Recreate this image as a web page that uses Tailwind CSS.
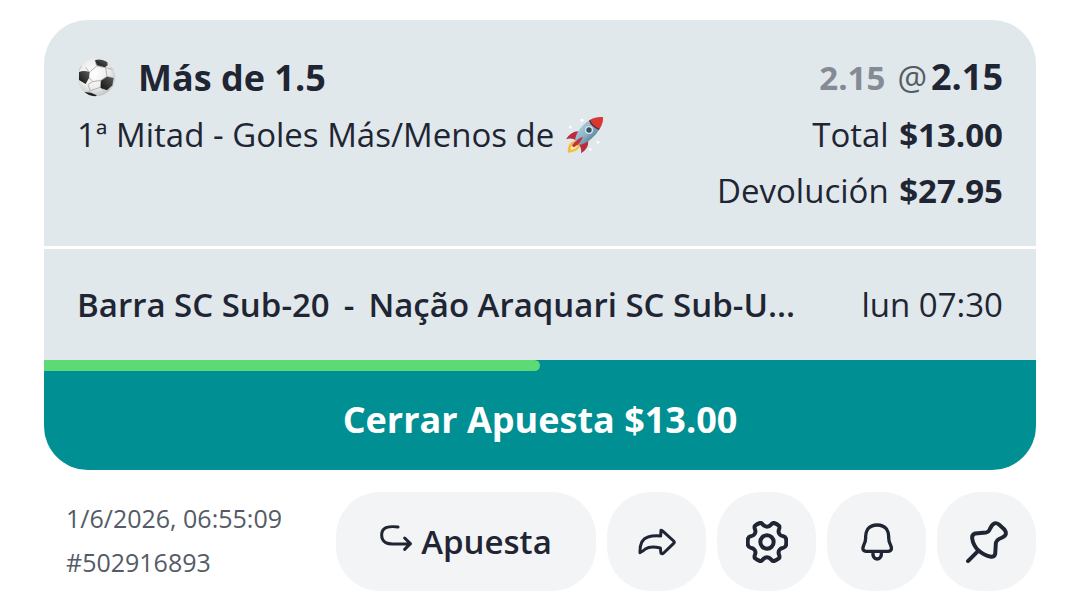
<!DOCTYPE html>
<html lang="es">
<head>
    <meta charset="UTF-8">
    <meta name="viewport" content="width=device-width, initial-scale=1.0">
    <title>Apuesta #502916893</title>
    <script src="https://cdn.jsdelivr.net/npm/@tailwindcss/browser@4"></script>
    <style>
        body { font-family: 'Open Sans', 'Noto Sans', sans-serif; }
    </style>
</head>
<body class="bg-white text-[#1f2533]">

    <main class="px-11 pt-5">
        <article class="overflow-hidden rounded-[44px] bg-[#e0e8eb]">

            <!-- Selection and stake -->
            <section class="px-[33px] pt-7 pb-[27px] text-[33px] leading-[56px]">
                <div class="flex items-center justify-between leading-[58px]">
                    <div class="flex items-center gap-[22px]">
                        <svg class="size-[39px]" viewBox="0 0 117 117" aria-hidden="true">
                            <defs>
                                <radialGradient id="ball" cx="45%" cy="40%" r="60%">
                                    <stop offset="0" stop-color="#fff"/>
                                    <stop offset="0.65" stop-color="#ececec"/>
                                    <stop offset="1" stop-color="#c4c6c6"/>
                                </radialGradient>
                                <linearGradient id="patch" x1="0" y1="1" x2="1" y2="0">
                                    <stop offset="0" stop-color="#111"/>
                                    <stop offset="1" stop-color="#5c5c5c"/>
                                </linearGradient>
                                <clipPath id="ball-clip"><circle cx="58" cy="58" r="57"/></clipPath>
                            </defs>
                            <g clip-path="url(#ball-clip)">
                                <circle cx="58" cy="58" r="57" fill="url(#ball)"/>
                                <g fill="none" stroke="#b3b3b3" stroke-width="3">
                                    <path d="M37 43L59 24L86 29L90 55L72 67L47 71L36 58"/>
                                    <path d="M59 24L54 8M86 29L106 34M90 55L108 60M47 71L34 79M72 67L70 88L40 98L33 80M70 88L80 97M40 98L30 104"/>
                                    <path d="M37 43L26 28M5 38L14 22"/>
                                </g>
                                <path d="M54 6Q75 1 91 12L92 22L84 28L60 22Z" fill="url(#patch)"/>
                                <path d="M6 42Q20 36 38 42L36 60L26 78L6 66Z" fill="url(#patch)"/>
                                <path d="M90 56L110 60L106 82L90 97L71 90L72 68Z" fill="url(#patch)"/>
                                <path d="M20 102L42 104L59 112L56 117L30 113Z" fill="#222"/>
                            </g>
                        </svg>
                        <h1 class="text-[36px] font-bold">Más de 1.5</h1>
                    </div>
                    <p class="flex items-baseline">
                        <s class="font-bold text-[#848b94] no-underline">2.15</s>
                        <span class="ml-3 text-[#555c67]">@</span>
                        <strong class="ml-1 text-[36px]">2.15</strong>
                    </p>
                </div>
                <div class="flex items-center justify-between">
                    <p class="flex items-center gap-3">
                        1ª Mitad - Goles Más/Menos de
                        <svg class="size-[38px]" viewBox="0 0 114 114" aria-hidden="true">
                            <defs>
                                <linearGradient id="hull" x1="0.25" y1="0.25" x2="0.75" y2="0.75">
                                    <stop offset="0" stop-color="#a9c9d7"/>
                                    <stop offset="0.5" stop-color="#8cb4c6"/>
                                    <stop offset="1" stop-color="#4e7b92"/>
                                </linearGradient>
                            </defs>
                            <g fill="#fff">
                                <circle cx="48" cy="13" r="5"/><circle cx="13" cy="33" r="4"/><circle cx="16" cy="50" r="3"/><circle cx="96" cy="79" r="4"/><circle cx="73" cy="100" r="4"/>
                            </g>
                            <path d="M25 74Q2 82 6 110Q34 109 42 91Z" fill="#f4bb3d"/>
                            <path d="M25 82Q14 88 14 101Q28 101 35 90Z" fill="#fff0a0"/>
                            <path d="M38 46Q16 45 0 70Q17 64 31 74Z" fill="#ba2b3c"/>
                            <path d="M67 75Q68 98 45 112Q48 97 38 84Z" fill="#ba2b3c"/>
                            <path d="M111 3Q70 1 43 37Q27 58 27 76L36 87Q57 86 76 68Q110 39 111 3Z" fill="url(#hull)"/>
                            <path d="M111 3Q88 2 73 11Q79 28 101 38Q112 22 111 3Z" fill="#d9372f"/>
                            <path d="M73 11Q79 28 101 38L99 42Q75 32 69 14Z" fill="#75212d"/>
                            <circle cx="69" cy="42" r="12" fill="#d5e8ee"/>
                            <circle cx="69" cy="42" r="8" fill="#36505e"/>
                            <path d="M51 62Q36 65 18 88Q19 93 24 94Q44 82 51 62Z" fill="#c5323c"/>
                        </svg>
                    </p>
                    <p>Total <strong class="ml-0.5">$13.00</strong></p>
                </div>
                <p class="text-right">Devolución <strong class="ml-0.5">$27.95</strong></p>
            </section>

            <!-- Match -->
            <section class="flex items-center justify-between border-t-3 border-white px-[33px] py-7 text-[33px] leading-[55px]">
                <h2 class="flex gap-[14px] font-semibold">
                    <span>Barra SC Sub-20</span>
                    <span>-</span>
                    <span>Nação Araquari SC Sub-U...</span>
                </h2>
                <time>lun 07:30</time>
            </section>

            <div class="h-[11px] bg-[#008f93]">
                <div class="h-full rounded-r-full bg-[#5dd975]" style="width: 50%"></div>
            </div>
            <button type="button" class="block w-full bg-[#008f93] pt-[21px] pb-[22px] text-[36px] leading-[56px] font-bold text-white">Cerrar Apuesta $13.00</button>
        </article>

        <!-- Ticket info and actions -->
        <footer class="mt-[22px] flex items-center justify-between">
            <div class="pb-1 pl-[22px] text-[25px] leading-[44px] text-[#555b66]">
                <p>1/6/2026, 06:55:09</p>
                <p>#502916893</p>
            </div>
            <div class="flex gap-[11px]">
                <button type="button" class="flex h-[99px] w-[260px] items-center justify-center gap-[9px] rounded-[44px] bg-[#f3f4f6] text-[33px] font-semibold">
                    <svg class="h-9 w-8 pb-2" viewBox="152 130 96 84" fill="none" stroke="currentColor" stroke-width="9" stroke-linecap="round" stroke-linejoin="round" aria-hidden="true">
                        <path d="M206 139Q184 136 170 141Q157 147 157 163Q157 179 169 186Q176 190 190 190H243M226 172L243 189L226 206"/>
                    </svg>
                    Apuesta
                </button>
                <button type="button" aria-label="Compartir" class="grid size-[99px] place-items-center rounded-[44px] bg-[#f3f4f6]">
                    <svg class="h-7 w-[38px]" viewBox="112 144 114 84" fill="none" stroke="currentColor" stroke-width="9" stroke-linecap="round" stroke-linejoin="round" aria-hidden="true">
                        <path d="M181 151Q184 151 188 155L219 183Q223 187 219 190L189 219Q185 223 181 220L179 204Q149 197 134 207Q126 215 118 218Q117 178 142 171Q157 166 180 168Z"/>
                    </svg>
                </button>
                <button type="button" aria-label="Ajustes" class="grid size-[99px] place-items-center rounded-[44px] bg-[#f3f4f6]">
                    <svg class="size-[42px]" viewBox="438 122 126 126" fill="none" stroke="currentColor" stroke-width="12" stroke-linecap="round" stroke-linejoin="round" aria-hidden="true">
                        <path d="M480 128Q484 127 488 132Q494 139 501 139Q508 139 514 132Q518 127 522 128Q531 131 537 136Q540 139 537 147Q534 155 538 161Q542 167 550 168Q556 169 558 175Q560 185 558 195Q556 201 550 202Q542 203 538 209Q534 215 537 223Q540 231 537 234Q531 239 522 242Q518 243 514 238Q508 231 501 231Q494 231 488 238Q484 243 480 242Q471 239 465 234Q462 231 465 223Q468 215 464 209Q460 203 452 202Q446 201 444 195Q442 185 444 175Q446 169 452 168Q460 167 464 161Q468 155 465 147Q462 139 465 136Q471 131 480 128Z"/>
                        <circle cx="501" cy="185" r="20"/>
                    </svg>
                </button>
                <button type="button" aria-label="Notificaciones" class="grid size-[99px] place-items-center rounded-[44px] bg-[#f3f4f6]">
                    <svg class="h-[38px] w-8" viewBox="122 127 97 115" fill="none" stroke="currentColor" stroke-width="10" stroke-linecap="round" stroke-linejoin="round" aria-hidden="true">
                        <path d="M171 133Q190 133 200 146Q206 155 206 168Q205 184 212 195Q217 206 211 211Q208 213 204 213H138Q134 213 131 211Q125 206 130 195Q137 184 136 168Q136 155 142 146Q152 133 171 133Z"/>
                        <path d="M158 215Q157 235 171 236Q185 235 184 215"/>
                    </svg>
                </button>
                <button type="button" aria-label="Fijar" class="grid size-[99px] place-items-center rounded-[44px] bg-[#f3f4f6]">
                    <svg class="size-[42px]" viewBox="437 121 128 128" fill="none" stroke="currentColor" stroke-width="12" stroke-linecap="round" stroke-linejoin="round" aria-hidden="true">
                        <path d="M524 128Q530 126 538 132L554 147Q560 155 558 162Q556 168 546 172Q530 178 528 188L526 221Q523 231 513 230Q492 226 475 211Q459 195 456 175Q454 163 465 159L498 156Q506 155 510 145Q516 131 524 128Z"/>
                        <path d="M475 211L443 243"/>
                    </svg>
                </button>
            </div>
        </footer>
    </main>

</body>
</html>
